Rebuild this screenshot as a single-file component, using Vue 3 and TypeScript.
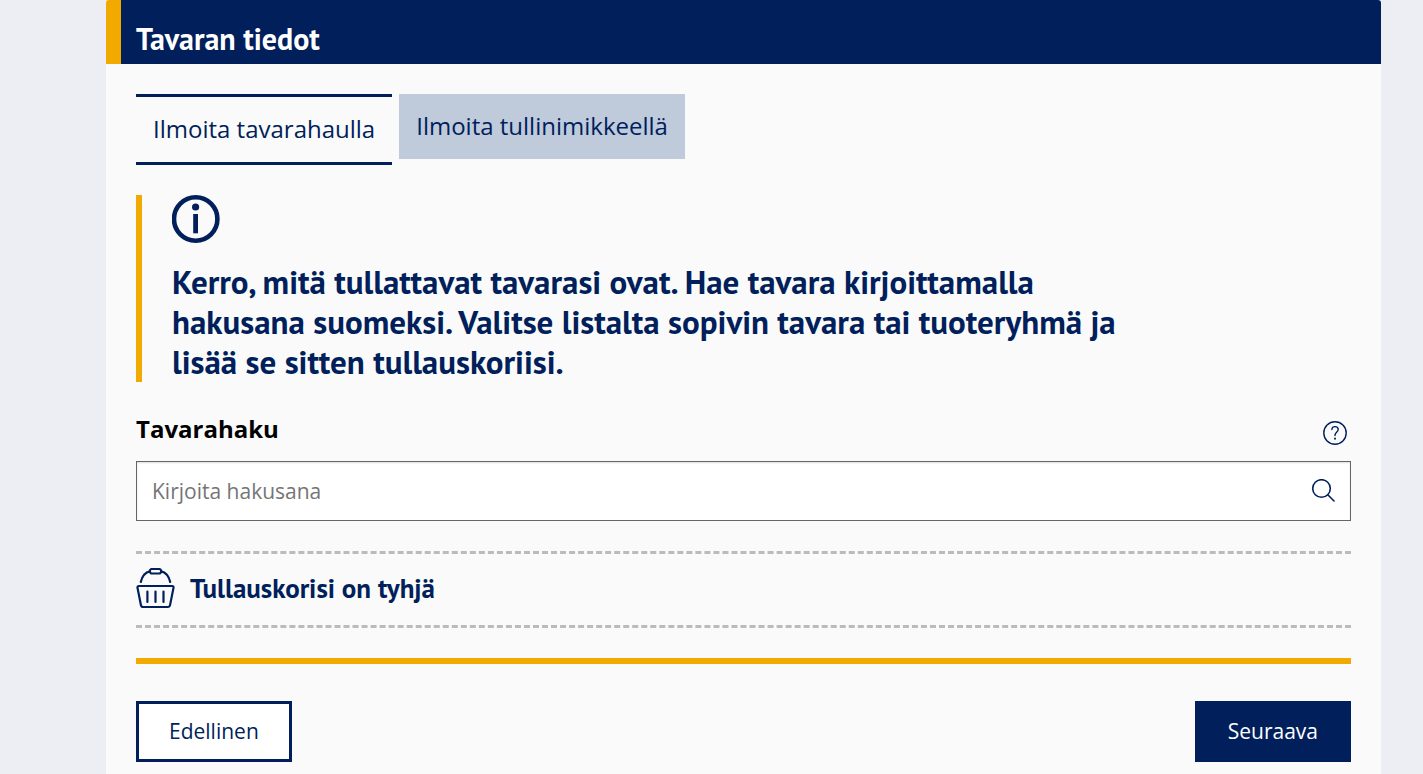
<script setup lang="ts">
import { ref } from 'vue'

const tabs = ['Ilmoita tavarahaulla', 'Ilmoita tullinimikkeellä']
const activeTab = ref(0)
const query = ref('')
</script>

<template>
  <main class="card">
    <header class="card-header">
      <h1>Tavaran tiedot</h1>
    </header>
    <div class="content">
      <div class="tabs" role="tablist">
        <button
          v-for="(tab, i) in tabs"
          :key="tab"
          type="button"
          role="tab"
          :aria-selected="activeTab === i"
          :class="['tab', { active: activeTab === i }]"
          @click="activeTab = i"
        >{{ tab }}</button>
      </div>

      <section class="info">
        <svg class="info-icon" viewBox="0 0 48 48" aria-hidden="true">
          <circle cx="23.7" cy="24" r="21.7" fill="none" stroke="currentColor" stroke-width="4.6" />
          <circle cx="23.6" cy="12" r="3.6" fill="currentColor" />
          <path d="M21.2 19h4.800v19.300h-4.800z" fill="currentColor" />
        </svg>
        <h2>Kerro, mitä tullattavat tavarasi ovat. Hae tavara kirjoittamalla hakusana suomeksi. Valitse listalta sopivin tavara tai tuoteryhmä ja lisää se sitten tullauskoriisi.</h2>
      </section>

      <div class="label-row">
        <label for="search">Tavarahaku</label>
        <button class="icon-button" type="button" aria-label="Ohje">
          <svg width="24" height="24" viewBox="0 0 24 24" fill="none" stroke="currentColor" stroke-width="1.4" stroke-linecap="round" aria-hidden="true">
            <circle cx="12" cy="12" r="11.2" />
            <path d="M8.900 8.600C8.900 6.600 10.200 5.600 12 5.600s3.200 1.100 3.200 2.900c0 2.600-3.200 2.800-3.200 5.500v.6" />
            <path d="M12 17.500v.2" stroke-width="1.900" />
          </svg>
        </button>
      </div>
      <div class="search-box">
        <input id="search" v-model="query" type="text" placeholder="Kirjoita hakusana" />
        <button class="icon-button" type="button" aria-label="Hae">
          <svg width="24" height="24" viewBox="0 0 24 24" fill="none" stroke="currentColor" stroke-width="1.6" stroke-linecap="round" aria-hidden="true">
            <circle cx="10.500" cy="9.500" r="8.800" />
            <path d="M16.800 15.800l6.200 6.200" />
          </svg>
        </button>
      </div>

      <section class="basket">
        <svg width="39" height="42" viewBox="0 0 39 42" fill="none" stroke="currentColor" stroke-width="2.2" stroke-linecap="round" stroke-linejoin="round" aria-hidden="true">
          <path d="M4.800 15C6.200 8.700 9.600 5.200 14 4.300M25 4.300c4.400.9 7.800 4.400 9.200 10.700" />
          <path d="M15.200 2h8.600l1.300 1.200v2l-1.300 1.300h-8.600l-1.300-1.300v-2z" />
          <path d="M3 19h33c1.100 0 1.700.8 1.500 1.900l-3.400 17c-.3 1.400-.9 2.100-2.300 2.100H7.200c-1.400 0-2-.7-2.300-2.100l-3.400-17C1.300 19.800 1.900 19 3 19z" />
          <path d="M11.400 24.500v10.500M19.500 24.500v10.500M27.500 24.500v10.500" />
        </svg>
        <h3>Tullauskorisi on tyhjä</h3>
      </section>

      <footer class="actions">
        <button type="button" class="action">Edellinen</button>
        <button type="button" class="action primary">Seuraava</button>
      </footer>
    </div>
  </main>
</template>

<style>
body {
  margin: 0;
  background: #edeef3;
}
</style>

<style scoped>
.card {
  box-sizing: border-box;
  min-height: 100vh;
  margin: 0 42px 0 106px;
  background: #fafafa;
  color: #001f5b;
  font-family: "Open Sans", "Noto Sans", sans-serif;
  border-radius: 3px 3px 0 0;
}
h1, h2, h3 {
  margin: 0;
  font-family: "PT Sans", "Open Sans", sans-serif;
  font-weight: 700;
}
button, input {
  font-family: inherit;
  color: inherit;
  border-radius: 0;
}
button {
  cursor: pointer;
}
.card-header {
  padding: 19px 15px 5px;
  background: #001f5b;
  border-left: 15px solid #f3aa00;
  border-radius: 3px 3px 0 0;
  color: #fff;
}
h1 {
  font-size: 30px;
  line-height: 40px;
}
.content {
  padding: 30px 30px 12px;
}
.tabs {
  display: flex;
  align-items: flex-start;
  gap: 7px;
}
.tab {
  padding: 0 17px 2px;
  border: 0;
  background: #bfcadb;
  font-size: 24px;
  font-weight: 400;
  line-height: 63px;
}
.tab.active {
  background: transparent;
  border-top: 3px solid #001f5b;
  border-bottom: 3px solid #001f5b;
}
.info {
  margin-top: 30px;
  padding-left: 30px;
  border-left: 6px solid #f3aa00;
}
.info-icon {
  display: block;
  width: 48px;
  height: 48px;
}
h2 {
  max-width: 960px;
  padding-top: 19px;
  font-size: 33px;
  line-height: 40px;
}
.label-row {
  display: flex;
  justify-content: space-between;
  align-items: center;
  margin-top: 31px;
  padding-right: 4px;
}
label {
  color: #000;
  font-size: 24px;
  font-weight: 700;
  line-height: 32px;
}
.icon-button {
  display: block;
  padding: 0;
  border: 0;
  background: none;
}
.icon-button svg {
  display: block;
}
.label-row .icon-button {
  padding-top: 8px;
}
.search-box {
  display: flex;
  align-items: center;
  margin-top: 16px;
  padding: 0 15px;
  border: 1px solid #666;
  background: #fff;
  box-shadow: inset 0 1px 2px #ddd;
}
input {
  flex: 1;
  min-width: 0;
  height: 58px;
  padding: 0;
  border: 0;
  outline: 0;
  background: transparent;
  font-size: 21px;
}
input::placeholder {
  color: #757575;
  opacity: 1;
}
.basket {
  display: flex;
  align-items: center;
  gap: 15px;
  margin-top: 30px;
  height: 68px;
  padding-bottom: 3px;
  border-top: 3px dashed #bbb;
  border-bottom: 3px dashed #bbb;
}
h3 {
  font-size: 27px;
  line-height: 36px;
}
.actions {
  display: flex;
  justify-content: space-between;
  margin-top: 30px;
  padding-top: 37px;
  border-top: 6px solid #f3aa00;
}
.action {
  padding: 0 30px;
  border: 3px solid #001f5b;
  background: #fff;
  font-size: 21px;
  font-weight: 400;
  line-height: 55px;
}
.action.primary {
  background: #001f5b;
  color: #fff;
}
</style>
